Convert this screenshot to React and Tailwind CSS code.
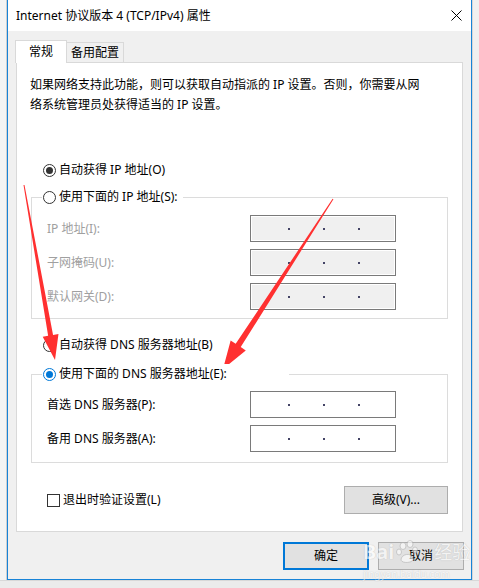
import React from "react";

function Radio({ checked, blue }) {
  return (
    <span
      className={`w-[13px] h-[13px] rounded-full border bg-white flex items-center justify-center shrink-0 ${
        blue ? "border-[#0078d7]" : "border-[#333333]"
      }`}
    >
      {checked && (
        <span
          className={`w-[7px] h-[7px] rounded-full ${blue ? "bg-[#0078d7]" : "bg-[#333333]"}`}
        />
      )}
    </span>
  );
}

function IpBox({ disabled }) {
  return (
    <div
      className={`w-[146px] h-[27px] border border-[#7a7a7a] flex items-center pl-[37px] gap-[33px] ${
        disabled ? "bg-[#f0f0f0] shadow-[inset_0_0_0_1px_#ffffff]" : "bg-white"
      }`}
    >
      <span className="w-[2px] h-[2px] bg-[#444466]" />
      <span className="w-[2px] h-[2px] bg-[#444466]" />
      <span className="w-[2px] h-[2px] bg-[#444466]" />
    </div>
  );
}

function Row({ label, disabled }) {
  return (
    <div className="flex items-center h-[27px]">
      <span className={`w-[203px] ${disabled ? "text-[#a0a0a0]" : "text-black"}`}>{label}</span>
      <IpBox disabled={disabled} />
    </div>
  );
}

export default function App() {
  return (
    <div className="w-[479px] h-[588px] relative overflow-hidden bg-[#ececec] flex flex-col font-['Noto_Sans','Noto_Sans_CJK_SC',sans-serif] text-[12px] leading-[20px] text-black">
      <div className="flex h-[580px]">
        <div className="w-[7px] bg-[#f4f4f4] border-r border-[#cfcfcf]" />
        <div className="w-[465px] flex flex-col border-x border-b border-[#1883d7] bg-[#f0f0f0]">
          {/* title bar */}
          <div className="h-[31px] bg-white flex items-center justify-between pl-[8px] pr-[8px]">
            <span className="text-[12px]">Internet 协议版本 4 (TCP/IPv4) 属性</span>
            <svg width="11" height="11" viewBox="0 0 11 11" className="mr-px">
              <path d="M0.5 0.5 L10.5 10.5 M10.5 0.5 L0.5 10.5" stroke="#000" strokeWidth="1" />
            </svg>
          </div>
          {/* body */}
          <div className="flex flex-col px-[8px] pt-[9px]">
            <div className="flex items-end h-[22px] -ml-px">
              <div className="relative z-10 h-[23px] -mb-px bg-white border border-[#d9d9d9] border-b-0 w-[52px] flex items-center justify-center">
                常规
              </div>
              <div className="h-[20px] bg-[#f0f0f0] border border-[#d9d9d9] border-l-0 border-b-0 w-[57px] flex items-center justify-center">
                备用配置
              </div>
            </div>
            <div className="h-[470px] border border-[#d9d9d9] bg-white px-[13px] flex flex-col">
              <div className="mt-[12px] flex flex-col whitespace-nowrap">
                <span>如果网络支持此功能，则可以获取自动指派的 IP 设置。否则，你需要从网</span>
                <span>络系统管理员处获得适当的 IP 设置。</span>
              </div>

              <div className="mt-[45px] h-[20px] flex items-center pl-[13px] gap-[3px]">
                <Radio checked />
                <span>自动获得 IP 地址(O)</span>
              </div>

              <div className="relative z-10 mt-[7px] ml-[12px] h-[20px] w-fit bg-white pl-px pr-[5px] flex items-center gap-[3px]">
                <Radio />
                <span>使用下面的 IP 地址(S):</span>
              </div>
              <div className="-mt-[10px] ml-px w-[417px] h-[122px] border border-[#dcdcdc] pt-[17px] pl-[15px] flex flex-col gap-[7px]">
                <Row label="IP 地址(I):" disabled />
                <Row label="子网掩码(U):" disabled />
                <Row label="默认网关(D):" disabled />
              </div>

              <div className="mt-[16px] h-[20px] flex items-center pl-[13px] gap-[3px]">
                <Radio />
                <span>自动获得 DNS 服务器地址(B)</span>
              </div>

              <div className="relative z-10 mt-[9px] ml-[12px] h-[20px] w-[247px] bg-white pl-px flex items-center gap-[3px]">
                <Radio checked blue />
                <span>使用下面的 DNS 服务器地址(E):</span>
              </div>
              <div className="-mt-[10px] ml-px w-[417px] h-[89px] border border-[#dcdcdc] pt-[16px] pl-[15px] flex flex-col gap-[7px]">
                <Row label="首选 DNS 服务器(P):" />
                <Row label="备用 DNS 服务器(A):" />
              </div>

              <div className="mt-[23px] ml-px w-[417px] h-[28px] flex items-center justify-between">
                <div className="flex items-center gap-[3px] pl-[16px]">
                  <span className="w-[13px] h-[13px] border border-[#333333] bg-white" />
                  <span>退出时验证设置(L)</span>
                </div>
                <div className="w-[104px] h-[28px] border border-[#adadad] bg-[#e1e1e1] flex items-center justify-center">
                  高级(V)...
                </div>
              </div>
            </div>

            <div className="mt-[10px] -mr-px flex justify-end gap-[9px]">
              <div className="w-[86px] h-[28px] border-2 border-[#0078d7] bg-[#e1e1e1] flex items-center justify-center">
                确定
              </div>
              <div className="w-[86px] h-[28px] border border-[#adadad] bg-[#e1e1e1] flex items-center justify-center">
                取消
              </div>
            </div>
          </div>
        </div>
        <div className="flex-1 bg-[#f0f0f0] border-l border-[#d6d6d6]" />
      </div>
      <div className="h-[8px] bg-[#ebebeb] border-t border-[#d8d8d8]" />

      {/* watermark */}
      <div className="absolute left-[363px] top-[539px] flex flex-col pointer-events-none opacity-60">
        <div className="flex items-center h-[26px]">
          <span className="text-[20px] leading-[26px] font-bold text-white [text-shadow:0_0_1px_#9a9a9a]">
            Bai
          </span>
          <svg width="28" height="24" viewBox="0 0 28 24" className="mx-px">
            <g fill="#ffffff" stroke="#a8a8a8" strokeWidth="0.8">
              <ellipse cx="8" cy="6" rx="3" ry="3.5" />
              <ellipse cx="15" cy="4" rx="3" ry="3.5" />
              <ellipse cx="4" cy="12" rx="2.5" ry="3" />
              <ellipse cx="20" cy="10" rx="2.5" ry="3" />
              <path d="M6 20 C6 14 16 12 18 18 C20 23 7 24 6 20 Z" />
            </g>
          </svg>
          <span className="ml-[10px] text-[18px] leading-[26px] text-white [text-shadow:0_0_1px_#9a9a9a]">经验</span>
        </div>
        <span className="text-[10px] leading-[10px] text-white [text-shadow:0_0_1px_#9a9a9a] mt-[4px]">
          jingyan.baidu.com
        </span>
      </div>

      {/* red arrows */}
      <svg className="absolute inset-0 pointer-events-none" width="479" height="588" viewBox="0 0 479 588">
        <polygon
          points="24.49,184.91 53.06,334.96 58.48,334.0 55,360 42.72,336.8 48.14,335.84 23.51,185.09"
          fill="#ff3030"
        />
        <polygon
          points="333.42,199.27 240.73,347.12 245.77,350.38 223,369 230.65,340.6 235.69,343.86 332.58,198.73"
          fill="#ff3030"
        />
      </svg>
    </div>
  );
}
